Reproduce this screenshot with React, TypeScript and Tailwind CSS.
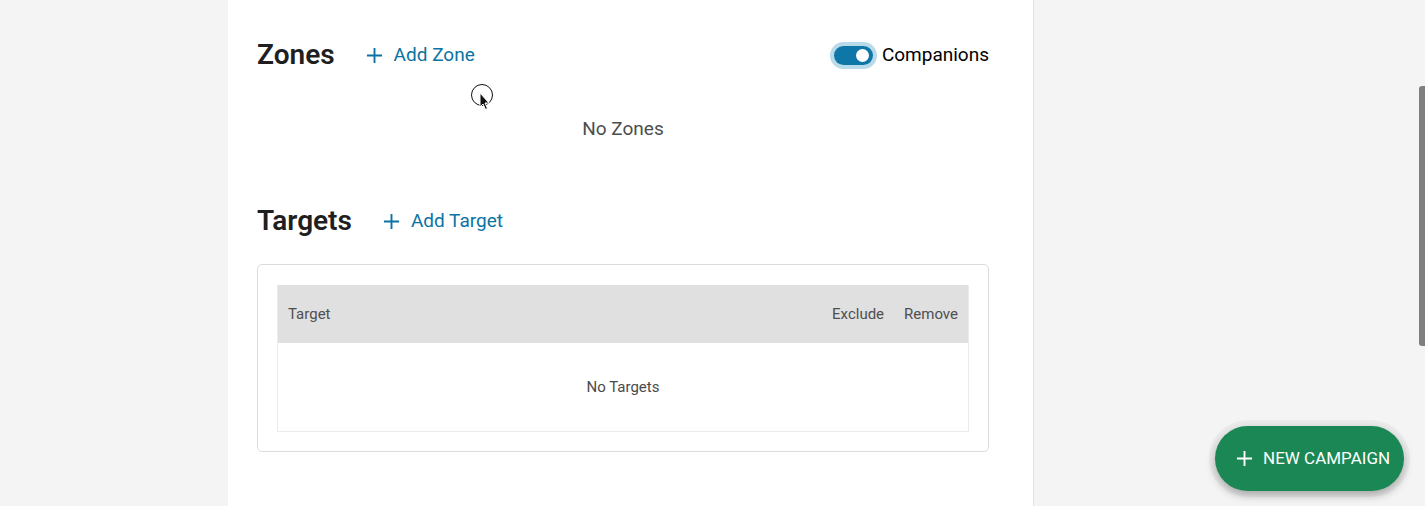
import React from 'react'

function PlusIcon({ className }: { className?: string }) {
  return (
    <svg viewBox="0 0 18 18" className={className} fill="none" stroke="currentColor" strokeWidth="2">
      <path d="M9 1v16M1 9h16" />
    </svg>
  )
}

function Toggle() {
  return (
    <div className="rounded-full bg-[#b9dbe9] p-[4px]">
      <div className="w-[39px] h-[19px] rounded-full bg-[#0f76a8] flex items-center justify-end pr-[4px]">
        <div className="w-[13px] h-[13px] rounded-full bg-white" />
      </div>
    </div>
  )
}

function Cursor() {
  return (
    <svg className="absolute left-[469px] top-[82px] w-[26px] h-[30px]" viewBox="0 0 26 30">
      <circle cx="13" cy="13" r="10.5" fill="none" stroke="#111" strokeWidth="1" />
      <path d="M11 11 L11 25 L14 22 L16.5 27.5 L18.5 26.5 L16 21 L20 21 Z" fill="#111" stroke="#fff" strokeWidth="1" />
    </svg>
  )
}

export default function App() {
  return (
    <div className="relative h-[506px] overflow-hidden bg-[#f4f4f4] flex font-['Roboto',sans-serif]">
      <div className="w-[228px] shrink-0" />
      <div className="w-[806px] shrink-0 bg-white border-r border-[#e2e2e2] pl-[29px] pr-[44px] pt-[35px]">
        <div className="flex items-center h-[40px]">
          <h2 className="text-[28px] font-semibold text-[#1f1f1f]">Zones</h2>
          <button className="ml-[31px] flex items-center text-[#0a73a3] text-[19px]">
            <PlusIcon className="w-[17px] h-[17px]" />
            <span className="ml-[11px]">Add Zone</span>
          </button>
          <div className="ml-auto flex items-center">
            <Toggle />
            <span className="ml-[5px] text-[19px] text-black">Companions</span>
          </div>
        </div>
        <div className="mt-[40px] h-[28px] flex items-center justify-center text-[19px] text-[#4d4d4d]">No Zones</div>
        <div className="mt-[58px] flex items-center h-[40px]">
          <h2 className="text-[28px] font-semibold text-[#1f1f1f]">Targets</h2>
          <button className="ml-[31px] flex items-center text-[#0a73a3] text-[19px]">
            <PlusIcon className="w-[17px] h-[17px]" />
            <span className="ml-[11px]">Add Target</span>
          </button>
        </div>
        <div className="mt-[23px] border border-[#dcdcdc] rounded-[5px] px-[19px] pt-[20px] pb-[19px]">
          <div className="border-x border-b border-[#ebebeb]">
            <div className="h-[58px] bg-[#e0e0e0] flex items-center px-[10px] text-[15px] text-[#4f4f4f]">
              <span>Target</span>
              <span className="ml-auto">Exclude</span>
              <span className="ml-[20px]">Remove</span>
            </div>
            <div className="h-[88px] flex items-center justify-center text-[15px] text-[#4a4a4a]">No Targets</div>
          </div>
        </div>
      </div>
      <div className="flex-1" />
      <div className="absolute right-0 top-[86px] w-[6px] h-[260px] rounded-l-[3px] bg-[#7f7f7f]" />
      <Cursor />
      <button className="absolute left-[1215px] top-[426px] w-[189px] h-[65px] rounded-[33px] bg-[#1b8754] text-white flex items-center pl-[21px] shadow-[0_4px_10px_rgba(0,0,0,0.3),0_0_0_6px_rgba(0,0,0,0.03)]">
        <PlusIcon className="w-[17px] h-[17px]" />
        <span className="ml-[10px] text-[17px]">NEW CAMPAIGN</span>
      </button>
    </div>
  )
}
